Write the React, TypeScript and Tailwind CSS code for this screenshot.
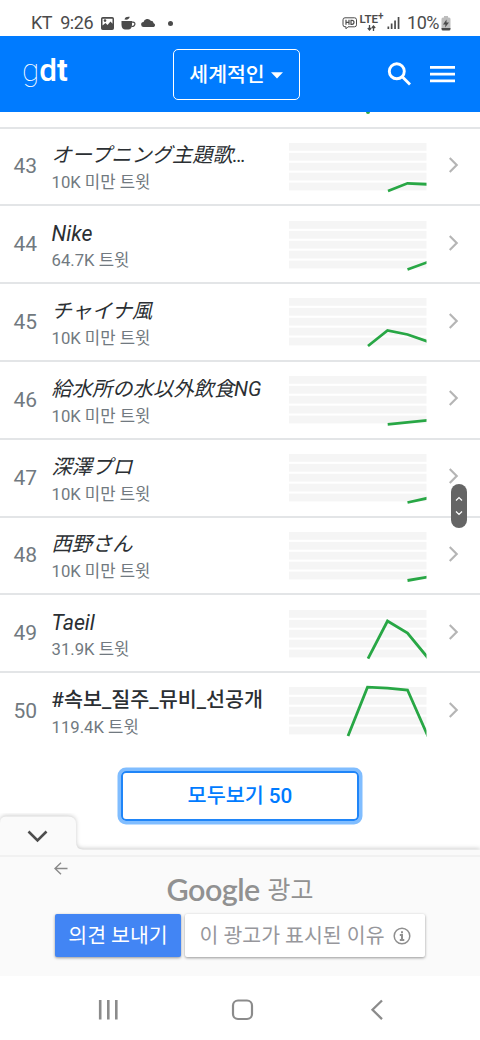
import { FC } from 'react'

interface Trend {
  rank: number
  name: string
  count: string
  points: string
  style: 'cjk' | 'latin' | 'tag'
}

const trends: Trend[] = [
  { rank: 43, name: 'オープニング主題歌…', count: '10K 미만 트윗', points: '99,48 118.5,40.3 139,41.3', style: 'cjk' },
  { rank: 44, name: 'Nike', count: '64.7K 트윗', points: '118.5,48.5 139,41', style: 'latin' },
  { rank: 45, name: 'チャイナ風', count: '10K 미만 트윗', points: '79,48 98.5,32.5 118.5,36.5 139,43.7', style: 'cjk' },
  { rank: 46, name: '給水所の水以外飲食NG', count: '10K 미만 트윗', points: '98.7,48.3 139,44.2', style: 'cjk' },
  { rank: 47, name: '深澤プロ', count: '10K 미만 트윗', points: '118.5,48.5 139,44', style: 'cjk' },
  { rank: 48, name: '西野さん', count: '10K 미만 트윗', points: '118.5,48.5 139,45', style: 'cjk' },
  { rank: 49, name: 'Taeil', count: '31.9K 트윗', points: '79,48.7 98.5,11 118.5,23 139,48', style: 'latin' },
  { rank: 50, name: '#속보_질주_뮤비_선공개', count: '119.4K 트윗', points: '59,49 78.5,0.2 98.5,1.2 118.5,3 139,49.5', style: 'tag' }
]

const nameStyles = {
  cjk: 'text-[20.3px] italic',
  latin: 'text-[21.3px] italic',
  tag: 'text-[20.7px] font-medium'
}

const Sparkline: FC<{ points: string }> = ({ points }) => (
  <svg className="w-[138px] h-[50px] shrink-0 mt-[2.5px]" viewBox="0 0 138 50" style={{ overflow: 'visible', clipPath: 'inset(-3px 0)' }}>
    {[0, 9.9, 19.8, 29.7, 39.6].map(y => (
      <rect key={y} x="0" y={y} width="138" height="7.8" fill="#f5f5f5" />
    ))}
    <polyline points={points} fill="none" stroke="#28a745" strokeWidth="2.8" strokeLinejoin="miter" />
  </svg>
)

const StatusBar: FC = () => (
  <div className="h-9 shrink-0 flex items-center justify-between pl-[31px] pr-[29px] pt-[10px] text-[#4b4b4b]">
    <div className="flex items-center">
      <span className="w-[62px] text-[18px] leading-none tracking-[-0.45px] whitespace-nowrap">KT&nbsp; 9:26</span>
      <svg className="w-[13px] h-[13px] ml-[7.5px]" viewBox="0 0 13 13">
        <path fillRule="evenodd" fill="currentColor" d="M1.8 0h9.4A1.8 1.8 0 0 1 13 1.8v9.4a1.8 1.8 0 0 1-1.8 1.8H1.8A1.8 1.8 0 0 1 0 11.200V1.800A1.800 1.800 0 0 1 1.800 0ZM1.500 1.700v6.800l3-2.500 2 2 3-3.500 2 2.300V1.700Z" />
        <circle cx="4" cy="3.600" r="1.300" fill="currentColor" />
      </svg>
      <svg className="w-[15px] h-[14px] ml-[7px]" viewBox="0 0 15 14">
        <path fill="currentColor" d="M.5 5h10.500v4c0 3-2 4.500-3.500 4.500H4C2.500 13.500.5 12 .5 9Z" />
        <path fill="none" stroke="currentColor" strokeWidth="1.200" d="M11 6.200h1c3 0 2.500 4.500-1.500 4.300" />
        <path fill="currentColor" d="M3.500 3.500C4 1 6 .5 8.700.8 8.500 3 6.500 4 3.500 3.500Z" />
      </svg>
      <svg className="w-[15px] h-[10px] ml-[5px]" viewBox="0 0 15 10">
        <path fill="currentColor" d="M2.800 9A2.500 2.500 0 0 1 2.500 4 4 4 0 0 1 9.800 2.800 3 3 0 0 1 12.700 5.200 2 2 0 0 1 12.700 9Z" />
      </svg>
      <div className="size-[5px] rounded-full bg-[#4b4b4b] ml-[12px]" />
    </div>
    <div className="flex items-center">
      <svg className="w-[15px] h-[13px]" viewBox="0 0 15 13" fill="none" stroke="currentColor">
        <path strokeWidth="1" d="M3 .8h9.500q2 0 2 2v5q0 2-2 2H6l-2 2v-2H3q-2 0-2-2v-5q0-2 2-2Z" />
        <path strokeWidth="1.200" d="M4 2.800v5M7 2.800v5M4 5.300h3M9 3.300h1q2 0 2 2t-2 2H9Z" />
      </svg>
      <div className="flex flex-col items-center w-[25px] ml-[2px]">
        <span className="text-[11.5px] leading-[9px] font-semibold whitespace-nowrap">LTE<sup className="text-[10px] leading-none -top-1">+</sup></span>
        <svg className="w-[9px] h-[6px]" viewBox="0 0 9 6" fill="none" stroke="currentColor" strokeWidth="1.300">
          <path d="M2.500 0v5M.8 3l1.700 2 1.700-2M6.500 6V1M4.800 3l1.700-2 1.700 2" />
        </svg>
      </div>
      <svg className="w-[13px] h-[12px] ml-[3px]" viewBox="0 0 13 12" fill="currentColor">
        <path d="M.5 9.500h1.700V12H.5ZM3.800 6.500h1.700V12H3.800ZM7.200 3.500h1.700V12H7.200ZM10.700 0h1.700v12h-1.700Z" />
      </svg>
      <span className="text-[18px] leading-none tracking-[-0.5px] ml-[7px]">10%</span>
      <svg className="w-[10px] h-[15px] ml-[2px]" viewBox="0 0 10 15">
        <path fill="#bdbdbd" d="M3 0h4v1.500h1A1.500 1.500 0 0 1 9.500 3v9.500H.5V3A1.500 1.500 0 0 1 2 1.500h1Z" />
        <path fill="#4b4b4b" d="M.5 12h9v1A1.500 1.500 0 0 1 8 14.500H2A1.500 1.500 0 0 1 .5 13ZM5.500 3.500 2 8.500h2.500L4 11.500l4-5H5.500Z" />
      </svg>
    </div>
  </div>
)

const Header: FC = () => (
  <header className="h-[76px] shrink-0 bg-[#007bff] text-white flex items-center justify-between pl-[22px] pr-[25px]">
    <div className="w-[80px] text-[31.5px] leading-none pb-[7px]">
      <span className="font-thin">g</span>
      <span className="font-medium">d</span>
      <span className="font-bold">t</span>
    </div>
    <button className="w-[127px] h-[51px] ml-[34px] border border-white rounded-[5px] flex items-center justify-center gap-[6px] pt-[2px] text-[20.5px] font-medium">
      세계적인
      <svg className="w-3 h-[7px]" viewBox="0 0 12 7"><path fill="currentColor" d="M0 .2h12L6 6.500Z" /></svg>
    </button>
    <div className="flex items-center gap-[18px] ml-[51px]">
      <svg className="w-[25px] h-[25px]" viewBox="0 0 25 25" fill="none" stroke="currentColor" strokeWidth="2.900">
        <circle cx="9.800" cy="9.300" r="7.500" />
        <path d="m15 14.500 8 8" />
      </svg>
      <svg className="w-[25px] h-[18px]" viewBox="0 0 25 18" fill="currentColor">
        <path d="M0 1h25v2.700H0ZM0 7.800h25v2.700H0ZM0 14.500h25v2.700H0Z" />
      </svg>
    </div>
  </header>
)

const TrendRow: FC<{ trend: Trend }> = ({ trend }) => (
  <li className="h-[77.8px] border-t-2 border-[#e3e5e7] flex items-center">
    <span className="w-[38px] pl-[13.5px] pt-[1.5px] text-[21px] text-[#717980]">{trend.rank}</span>
    <div className="w-[237px] pl-[13.5px] mr-[13.5px] pt-[6px] whitespace-nowrap">
      <div className={`leading-[27px] text-[#2b2f33] ${nameStyles[trend.style]}`}>{trend.name}</div>
      <div className="text-[16.7px] leading-[27px] text-[#717980]">{trend.count}</div>
    </div>
    <Sparkline points={trend.points} />
    <svg className="w-[10px] h-4 ml-[22px] mb-[3px]" viewBox="0 0 10 16" fill="none" stroke="#b5b5b5" strokeWidth="2.200">
      <path d="m.7 1 7 7-7 7" />
    </svg>
  </li>
)

const AdPanel: FC = () => (
  <div className="relative h-[127px] shrink-0 bg-[#fafafa]">
    {/* Collapse tab */}
    <svg className="absolute left-0 -top-[36px] w-[480px] h-[46px]" viewBox="0 0 480 46">
      <path fill="#fafafa" d="M0 10Q0 3.500 6 3.500H68Q76 3.500 76 11V29Q76 36.500 83 36.500H480V46H0Z" style={{ filter: 'drop-shadow(0 -1px 2px rgba(0,0,0,.2))' }} />
      <path fill="none" stroke="#4d4d4d" strokeWidth="2.600" d="m28.500 18.500 9 9 9-9" />
    </svg>
    <div className="absolute inset-x-0 top-[6px] h-[2px] bg-[#f1f1f1]" />
    <svg className="absolute left-[54px] top-[13px] w-[14px] h-[13px]" viewBox="0 0 14 13" fill="none" stroke="#8a8a8a" strokeWidth="1.400">
      <path d="M13.500 6.500H1M7 .7 1 6.500l6 5.800" />
    </svg>
    <div className="flex items-center justify-center pt-[22px] h-[60px] text-[#919191]">
      <span className="w-[101px] text-[30.5px] tracking-[-0.5px] font-[Lato] font-semibold">Google</span>
      <span className="text-[25px] pt-[2px]">광고</span>
    </div>
    <div className="flex justify-center gap-1 mt-[5px] text-[20.5px]">
      <div className="w-[126px] h-[43px] bg-[#4285f4] text-white rounded-xs shadow-[0_1px_3px_rgba(0,0,0,0.4)] flex items-center justify-center pt-px">의견 보내기</div>
      <div className="w-[240px] h-[43px] bg-white text-[#97979c] rounded-xs shadow-[0_1px_3px_rgba(0,0,0,0.4)] flex items-center justify-center gap-[8px] pt-px">
        이 광고가 표시된 이유
        <svg className="size-[18px]" viewBox="0 0 18 18" fill="none" stroke="#8f8f8f" strokeWidth="1.500">
          <circle cx="9" cy="9" r="7.800" />
          <path strokeWidth="2" d="M9 4.300v2M6.800 8H9v5M6.800 13h4.500" />
        </svg>
      </div>
    </div>
  </div>
)

const NavBar: FC = () => (
  <nav className="h-16 shrink-0 bg-white">
    <svg className="w-[480px] h-16" viewBox="0 0 480 64" fill="none" stroke="#8b8b8b" strokeWidth="2.600">
      <path d="M100.200 24v19.500M108.300 24v19.500M116.300 24v19.500" />
      <rect x="233" y="24.500" width="19" height="18.500" rx="5" strokeWidth="2.200" />
      <path strokeWidth="2.300" d="m382 24.500-9.500 9.300 9.500 9.300" />
    </svg>
  </nav>
)

export default function App() {
  return (
    <div className="relative w-[480px] h-[1040px] bg-white overflow-hidden flex flex-col font-[Roboto,'Noto_Sans_CJK_KR',sans-serif]">
      <StatusBar />
      <Header />
      <div className="h-[14.6px] shrink-0">
        <div className="w-1 h-[2px] ml-[366px] rounded-b-full bg-[#28a745]" />
      </div>
      <ul className="shrink-0 h-[622.4px]" lang="ja">
        {trends.map(trend => <TrendRow key={trend.rank} trend={trend} />)}
      </ul>
      <div className="flex-1 flex justify-center pt-[22px]">
        <button className="w-[238px] h-[50px] rounded-[5px] border-2 border-[#1f85f8] ring-[3.5px] ring-[#80bdff] pt-[2px] text-[#007bff] text-[20.7px] font-medium">
          모두보기 50
        </button>
      </div>
      <AdPanel />
      <NavBar />

      {/* Fast scroll handle */}
      <div className="absolute left-[451px] top-[484px] w-4 h-11 rounded-full bg-[#656565] flex items-center justify-center">
        <svg className="w-[8px] h-[22px]" viewBox="0 0 8 22" fill="none" stroke="white" strokeWidth="1.200">
          <path d="m1 5.500 3-3 3 3M1 16.500l3 3 3-3" />
        </svg>
      </div>
    </div>
  )
}
